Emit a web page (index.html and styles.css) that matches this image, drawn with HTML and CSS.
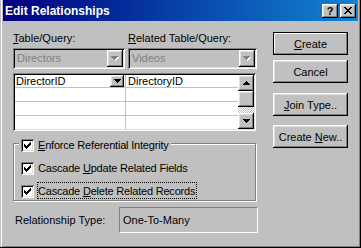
FILE: index.html
```html
<html>

<head>
  <link rel="stylesheet" href="styles.css">
</head>

<body>
  <div class="window">
    <div class="frame">
      <!-- Caption -->
      <div class="titlebar">
        <span class="title">Edit Relationships</span>
        <div class="caption-buttons">
          <span class="cap-btn help">?</span>
          <span class="cap-btn close">
            <svg width="8" height="7" viewBox="0 0 8 7"><path d="M0 0h2v1h-2z M6 0h2v1h-2z M1 1h2v1h-2z M5 1h2v1h-2z M2 2h4v1h-4z M3 3h2v1h-2z M2 4h4v1h-4z M1 5h2v1h-2z M5 5h2v1h-2z M0 6h2v1h-2z M6 6h2v1h-2z"/></svg>
          </span>
        </div>
      </div>

      <div class="client">
        <div class="main">
          <!-- Tables -->
          <div class="tables">
            <span class="field-label"><u>T</u>able/Query:</span>
            <span class="field-label"><u>R</u>elated Table/Query:</span>
            <div class="combo">
              <span class="combo-text">Directors</span>
              <span class="drop-btn">
                <svg width="8" height="5" viewBox="0 0 8 5"><path fill="#fff" d="M1 1h7v1h-1v1h-1v1h-1v1h-1v-1h-1v-1h-1v-1h-1z"/><path fill="#808080" d="M0 0h7v1h-1v1h-1v1h-1v1h-1v-1h-1v-1h-1v-1h-1z"/></svg>
              </span>
            </div>
            <div class="combo">
              <span class="combo-text">Videos</span>
              <span class="drop-btn">
                <svg width="8" height="5" viewBox="0 0 8 5"><path fill="#fff" d="M1 1h7v1h-1v1h-1v1h-1v1h-1v-1h-1v-1h-1v-1h-1z"/><path fill="#808080" d="M0 0h7v1h-1v1h-1v1h-1v1h-1v-1h-1v-1h-1v-1h-1z"/></svg>
              </span>
            </div>
          </div>

          <!-- Field grid -->
          <div class="grid">
            <div class="grid-rows">
              <div class="row">
                <div class="cell c1">DirectorID
                  <span class="cell-drop">
                    <svg width="7" height="4" viewBox="0 0 7 4"><path d="M0 0h7v1h-1v1h-1v1h-1v1h-1v-1h-1v-1h-1v-1h-1z"/></svg>
                  </span>
                </div>
                <div class="cell c2">DirectoryID</div>
              </div>
              <div class="row"><div class="cell c1"></div><div class="cell c2"></div></div>
              <div class="row"><div class="cell c1"></div><div class="cell c2"></div></div>
              <div class="row"><div class="cell c1"></div><div class="cell c2"></div></div>
            </div>
            <div class="vscroll">
              <span class="sb-btn">
                <svg width="7" height="4" viewBox="0 0 7 4"><path d="M3 0h1v1h1v1h1v1h1v1h-7v-1h1v-1h1v-1h1z"/></svg>
              </span>
              <span class="sb-thumb"></span>
              <span class="sb-track"></span>
              <span class="sb-btn">
                <svg width="7" height="4" viewBox="0 0 7 4"><path d="M0 0h7v1h-1v1h-1v1h-1v1h-1v-1h-1v-1h-1v-1h-1z"/></svg>
              </span>
            </div>
          </div>

          <!-- Integrity options -->
          <div class="group">
            <div class="check legend">
              <span class="box"><svg width="7" height="7" viewBox="0 0 7 7"><path d="M0 2h1v3h-1z M1 3h1v3h-1z M2 4h1v3h-1z M3 3h1v3h-1z M4 2h1v3h-1z M5 1h1v3h-1z M6 0h1v3h-1z"/></svg></span>
              <span class="check-label"><u>E</u>nforce Referential Integrity</span>
            </div>
            <div class="check">
              <span class="box"><svg width="7" height="7" viewBox="0 0 7 7"><path d="M0 2h1v3h-1z M1 3h1v3h-1z M2 4h1v3h-1z M3 3h1v3h-1z M4 2h1v3h-1z M5 1h1v3h-1z M6 0h1v3h-1z"/></svg></span>
              <span class="check-label">Cascade <u>U</u>pdate Related Fields</span>
            </div>
            <div class="check">
              <span class="box"><svg width="7" height="7" viewBox="0 0 7 7"><path d="M0 2h1v3h-1z M1 3h1v3h-1z M2 4h1v3h-1z M3 3h1v3h-1z M4 2h1v3h-1z M5 1h1v3h-1z M6 0h1v3h-1z"/></svg></span>
              <span class="check-label focus">Cascade <u>D</u>elete Related Records</span>
            </div>
          </div>

          <div class="rel-type">
            <span>Relationship Type:</span>
            <div class="static">One-To-Many</div>
          </div>
        </div>

        <!-- Buttons -->
        <div class="actions">
          <button class="btn default"><u>C</u>reate</button>
          <button class="btn">Cancel</button>
          <button class="btn spaced"><u>J</u>oin Type..</button>
          <button class="btn last">Create <u>N</u>ew..</button>
        </div>
      </div>
    </div>
  </div>
</body>

</html>
```

FILE: styles.css
```css
* {
  box-sizing: border-box;
}

body {
  margin: 0;
  background: #c0c0c0;
  color: #000;
  font-family: "Liberation Sans", Arial, sans-serif;
  font-size: 11px;
  overflow: hidden;
}

u {
  text-decoration: underline;
}

/* Window frame */
.window {
  width: 361px;
  height: 248px;
  padding-left: 1px;
  background: #c0c0c0;
  border-right: 1px solid #000;
  border-bottom: 1px solid #000;
}

.frame {
  height: 100%;
  display: flex;
  flex-direction: column;
  padding: 0 1px 1px;
  border-left: 1px solid #fff;
  border-right: 1px solid #808080;
  border-bottom: 1px solid #808080;
}

.titlebar {
  flex: none;
  height: 21px;
  display: flex;
  align-items: flex-start;
  background: linear-gradient(90deg, #000080, #1084d0);
  color: #fff;
}

.title {
  padding: 4px 0 0 2px;
  font-size: 12px;
  font-weight: bold;
  line-height: 14px;
}

.caption-buttons {
  display: flex;
  gap: 2px;
  margin: 4px 2px 0 auto;
}

.cap-btn {
  width: 16px;
  height: 14px;
  display: flex;
  align-items: center;
  justify-content: center;
  background: #c0c0c0;
  color: #000;
  font-size: 11px;
  font-weight: bold;
  line-height: 14px;
  box-shadow: inset -1px -1px #000, inset 1px 1px #fff, inset -2px -2px #808080, inset 2px 2px #dfdfdf;
}

.cap-btn svg {
  display: block;
  margin-top: -1px;
}

/* Raised / sunken edges */
.drop-btn,
.cell-drop,
.sb-btn,
.sb-thumb,
.btn {
  background: #c0c0c0;
  box-shadow: inset -1px -1px #000, inset 1px 1px #fff, inset -2px -2px #808080, inset 2px 2px #dfdfdf;
}

.combo,
.grid,
.box {
  box-shadow: inset 1px 1px #808080, inset -1px -1px #fff, inset 2px 2px #000, inset -2px -2px #dfdfdf;
}

/* Client area */
.client {
  flex: 1;
  display: flex;
  padding: 11px 10px 0;
}

.main {
  width: 245px;
}

.tables {
  display: grid;
  grid-template-columns: 112px 129px;
  column-gap: 3px;
  row-gap: 3px;
}

.field-label {
  line-height: 13px;
}

.combo {
  height: 21px;
  display: flex;
  padding: 2px;
  background: #c0c0c0;
}

.combo-text {
  flex: 1;
  padding-left: 2px;
  color: #808080;
  line-height: 17px;
}

.drop-btn {
  flex: none;
  width: 16px;
  height: 17px;
  display: flex;
  align-items: center;
  justify-content: center;
}

svg {
  display: block;
  shape-rendering: crispEdges;
}

/* Grid */
.grid {
  width: 243px;
  height: 58px;
  margin-top: 4px;
  padding: 2px;
  display: flex;
  background: #fff;
}

.grid-rows {
  flex: 1;
  overflow: hidden;
}

.row {
  height: 14px;
  display: flex;
  border-bottom: 1px solid #c0c0c0;
}

.row:first-child {
  height: 13px;
}

.cell {
  padding-left: 1px;
  line-height: 13px;
  white-space: nowrap;
}

.row:first-child .cell {
  line-height: 12px;
}

.c1 {
  width: 111px;
  display: flex;
  border-right: 1px solid #c0c0c0;
}

.c2 {
  flex: 1;
  padding-left: 2px;
}

.cell-drop {
  width: 14px;
  height: 12px;
  margin: 0 1px 0 auto;
  display: flex;
  align-items: center;
  justify-content: center;
}

.vscroll {
  width: 16px;
  display: flex;
  flex-direction: column;
}

.sb-btn {
  height: 16px;
  display: flex;
  align-items: center;
  justify-content: center;
}

.sb-thumb {
  height: 16px;
}

.sb-track {
  flex: 1;
  background: repeating-conic-gradient(#fff 0 25%, #c0c0c0 0 50%) 0 0 / 2px 2px;
}

/* Group of check boxes */
.group {
  width: 243px;
  margin-top: 12px;
  padding: 0 0 2px 7px;
  border: 1px solid #808080;
  box-shadow: 1px 1px 0 #fff, inset 1px 1px 0 #fff;
}

.check {
  height: 13px;
  display: flex;
  align-items: flex-start;
}

.check + .check {
  margin-top: 10px;
}

.legend {
  width: fit-content;
  margin: -5px 0 0 -2px;
  padding: 0 2px;
  background: #c0c0c0;
}

.box {
  flex: none;
  width: 13px;
  height: 13px;
  padding: 3px;
  background: #fff;
}

.check-label {
  margin-left: 4px;
  line-height: 13px;
  letter-spacing: -0.2px;
  white-space: nowrap;
}

.focus {
  margin-top: -2px;
  padding: 2px 1px 0 0;
  outline: 1px dotted #000;
}

/* Relationship type */
.rel-type {
  display: flex;
  align-items: center;
  justify-content: space-between;
  margin-top: 6px;
  padding-left: 2px;
}

.static {
  width: 139px;
  height: 26px;
  display: flex;
  align-items: center;
  padding-left: 3px;
  border: 1px solid;
  border-color: #808080 #fff #fff #808080;
}

/* Command buttons */
.actions {
  width: 75px;
  margin-left: 15px;
  display: flex;
  flex-direction: column;
}

.btn {
  width: 75px;
  height: 23px;
  padding: 0;
  border: none;
  color: #000;
  font: inherit;
}

.btn + .btn {
  margin-top: 5px;
}

.btn.spaced {
  margin-top: 10px;
}

.btn.last {
  margin-top: 9px;
}

.btn.default {
  box-shadow: inset 0 0 0 1px #000, inset -2px -2px #808080, inset 2px 2px #fff;
}
```
